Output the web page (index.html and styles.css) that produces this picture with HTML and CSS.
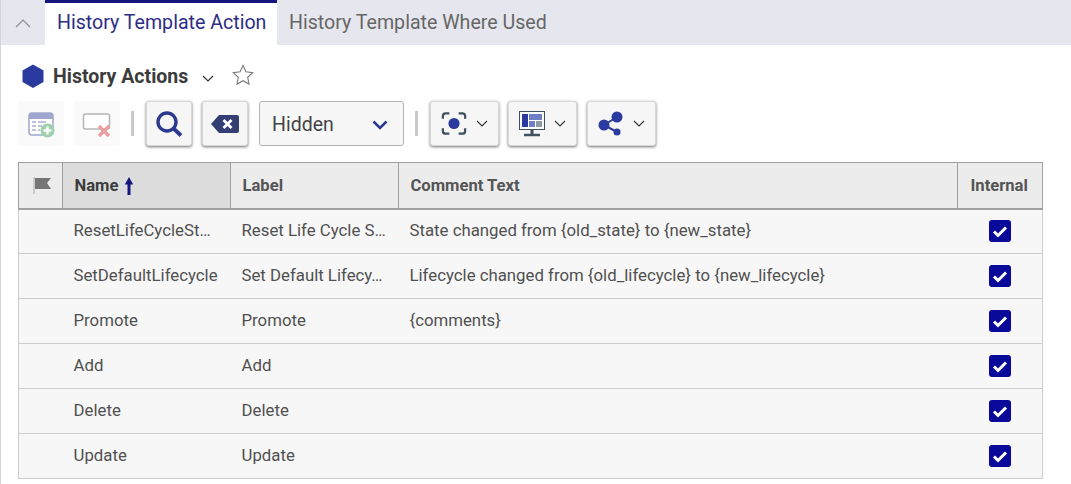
FILE: index.html
```html
<!DOCTYPE html>
<html lang="en">

<head>
    <meta charset="UTF-8">
    <meta name="viewport" content="width=device-width, initial-scale=1.0">
    <title>History Actions</title>
    <link rel="stylesheet" href="styles.css">
</head>

<body>
    <nav class="tabs">
        <button class="collapse">
            <svg width="16" height="10" viewBox="0 0 16 10"><path d="M1 9l7-7 7 7" fill="none" stroke="#8a8d94" stroke-width="1.2"/></svg>
        </button>
        <div class="tab active">History Template Action</div>
        <div class="tab">History Template Where Used</div>
    </nav>

    <main class="content">
        <div class="title-row">
            <svg class="hex" width="22" height="24" viewBox="0 0 22 24"><path d="M11 .5l10.500 6v11.500l-10.500 6-10.500-6V6.500z" fill="#2b3a9f"/></svg>
            <h1>History Actions</h1>
            <svg class="chev-title" width="12" height="7" viewBox="0 0 12 7"><path d="M1 1l5 5 5-5" fill="none" stroke="#333" stroke-width="1.200"/></svg>
            <svg class="star" width="22" height="22" viewBox="0 0 22 22"><path d="M11 1.500l2.900 6.300 6.800.8-5 4.700 1.300 6.800-6-3.400-6 3.400 1.300-6.800-5-4.700 6.800-.8z" fill="none" stroke="#7b7b7b" stroke-width="1.100"/></svg>
        </div>

        <div class="toolbar">
            <button class="tool disabled">
                <svg width="28" height="28" viewBox="0 0 28 28">
                    <rect x="2" y="3" width="24" height="22" rx="3" fill="#fff" stroke="#9ea6cf" stroke-width="1.500"/>
                    <path d="M2 6a3 3 0 0 1 3-3h18a3 3 0 0 1 3 3v3H2z" fill="#9ea6cf"/>
                    <path d="M5 12h4M11 12h8M5 16h4M11 16h4M5 20h4M11 20h2" stroke="#a9b0d3" stroke-width="1.500"/>
                    <circle cx="20.500" cy="20.500" r="7" fill="#9fd0ab"/>
                    <path d="M20.500 16.500v8M16.500 20.500h8" stroke="#fff" stroke-width="2.400"/>
                </svg>
            </button>
            <button class="tool disabled">
                <svg width="30" height="28" viewBox="0 0 30 28">
                    <rect x="1.500" y="4" width="26" height="15" rx="2" fill="#fff" stroke="#b5b5b5" stroke-width="1.500"/>
                    <path d="M4 19h20" stroke="#c9c9c9" stroke-width="2"/>
                    <path d="M17 16l10 10M27 16l-10 10" stroke="#e9a0a0" stroke-width="3.500"/>
                </svg>
            </button>
            <span class="sep"></span>
            <button class="tool raised">
                <svg width="28" height="28" viewBox="0 0 28 28"><circle cx="12" cy="12" r="9" fill="none" stroke="#2b3a8f" stroke-width="3.400"/><path d="M18 18l8 7.500" stroke="#2b3a8f" stroke-width="3.800"/></svg>
            </button>
            <button class="tool raised">
                <svg width="30" height="20" viewBox="0 0 30 20"><path d="M9 1h18a2 2 0 0 1 2 2v14a2 2 0 0 1-2 2H9L1 10z" fill="#333f73"/><path d="M13.500 6l8 8M21.500 6l-8 8" stroke="#fff" stroke-width="2.800"/></svg>
            </button>
            <div class="select">
                <span>Hidden</span>
                <svg width="16" height="10" viewBox="0 0 16 10"><path d="M1.500 1.500L8 8l6.500-6.500" fill="none" stroke="#2b3a8f" stroke-width="2.600"/></svg>
            </div>
            <span class="sep"></span>
            <button class="tool raised wide">
                <svg width="26" height="25" viewBox="0 0 28 26">
                    <path d="M2 8V5a3 3 0 0 1 3-3h4M19 2h4a3 3 0 0 1 3 3v3M26 18v3a3 3 0 0 1-3 3h-4M9 24H5a3 3 0 0 1-3-3v-3" fill="none" stroke="#3f5060" stroke-width="2.400"/>
                    <circle cx="14" cy="13" r="6" fill="#2b3a9f"/>
                </svg>
                <svg class="chev" width="12" height="7" viewBox="0 0 12 7"><path d="M1 1l5 5 5-5" fill="none" stroke="#333" stroke-width="1.100"/></svg>
            </button>
            <button class="tool raised wide">
                <svg width="26" height="26" viewBox="0 0 26 26">
                    <rect x="0.500" y="0.500" width="25" height="18" fill="#fff" stroke="#3f5060"/>
                    <rect x="3" y="3" width="6" height="13" fill="#2b3a9f"/>
                    <rect x="10" y="3" width="13" height="6" fill="#6f7fc8"/>
                    <rect x="10" y="10" width="6" height="6" fill="#6f7fc8"/>
                    <rect x="17" y="10" width="6" height="6" fill="#8d9ba5"/>
                    <path d="M13 19v4" stroke="#3f5060" stroke-width="3"/>
                    <path d="M5 24h16" stroke="#3f5060" stroke-width="2.500"/>
                </svg>
                <svg class="chev" width="12" height="7" viewBox="0 0 12 7"><path d="M1 1l5 5 5-5" fill="none" stroke="#333" stroke-width="1.100"/></svg>
            </button>
            <button class="tool raised wide">
                <svg width="26" height="26" viewBox="0 0 26 26">
                    <path d="M6 14L19 6M6 14l13 7" stroke="#2b3a9f" stroke-width="2"/>
                    <circle cx="6" cy="14" r="5.500" fill="#2b3a9f"/>
                    <circle cx="19" cy="6" r="5.500" fill="#2b3a9f"/>
                    <circle cx="19" cy="21" r="3.500" fill="#2b3a9f"/>
                </svg>
                <svg class="chev" width="12" height="7" viewBox="0 0 12 7"><path d="M1 1l5 5 5-5" fill="none" stroke="#333" stroke-width="1.100"/></svg>
            </button>
        </div>

        <table class="grid">
            <thead>
                <tr>
                    <th class="col-flag">
                        <svg class="flag" width="18" height="17" viewBox="0 0 18 17"><path d="M1 0v17" stroke="#aaa" stroke-width="1"/><path d="M2 1h16l-4 5 4 6H2z" fill="#757575"/></svg>
                    </th>
                    <th class="col-name sorted">Name
                        <svg class="arrow" width="10" height="18" viewBox="0 0 10 18"><path d="M5 0l4.200 7.500H6.500V18h-3V7.500H.8z" fill="#15157f"/></svg>
                    </th>
                    <th class="col-label">Label</th>
                    <th>Comment Text</th>
                    <th class="col-internal">Internal</th>
                </tr>
            </thead>
            <tbody id="rows"></tbody>
        </table>
    </main>

    <script src="app.js"></script>
</body>

</html>
```

FILE: styles.css
```css
* {
    box-sizing: border-box;
}

body {
    margin: 0;
    height: 484px;
    overflow: hidden;
    background: #fff;
    border-left: 1px solid #d4d4d4;
    font-family: Roboto, "Liberation Sans", sans-serif;
    color: #505050;
}

button {
    font: inherit;
    padding: 0;
    cursor: pointer;
}

.tabs {
    display: flex;
    height: 45px;
    background: #e6e7ee;
}

.collapse {
    width: 44px;
    border: 0;
    background: none;
    display: flex;
    align-items: center;
    justify-content: center;
}

.tab {
    padding: 3px 11px 0 12px;
    font-size: 19.600px;
    line-height: 39px;
    white-space: nowrap;
    color: #666;
}

.tab.active {
    width: 232px;
    background: #fff;
    border-top: 3px solid #15157f;
    padding-top: 0;
    color: #2d2d86;
}

.content {
    padding: 0 17px;
}

.title-row {
    display: flex;
    align-items: center;
    height: 54px;
    padding: 8px 0 0 4px;
}

.title-row h1 {
    margin: 0 0 0 9px;
    font-size: 19.500px;
    font-weight: 700;
    color: #3c3c3c;
}

.chev-title {
    margin-left: 14px;
    margin-top: 4px;
}

.star {
    margin-left: 18px;
    margin-bottom: 2px;
}

.toolbar {
    display: flex;
    align-items: center;
    height: 45px;
    margin-top: 2px;
}

.tool {
    width: 46px;
    height: 45px;
    margin-right: 10px;
    border: 0;
    border-radius: 3px;
    background: #f6f6f7;
    display: flex;
    align-items: center;
    justify-content: center;
}

.tool.disabled {
    background: #fafafa;
}

.tool.raised {
    border: 1px solid #d8d8d8;
    box-shadow: 0 1px 3px rgba(0, 0, 0, 0.55);
}

.tool.wide {
    width: 69px;
    margin-right: 9px;
    gap: 9px;
}

.tool.wide:last-child {
    margin-left: 1px;
}

.sep {
    width: 3px;
    height: 25px;
    margin: 0 12px 0 1px;
    background: #c9c9c9;
}

.select {
    width: 145px;
    height: 45px;
    margin: 0 10px 0 1px;
    padding: 2px 15px 0 12px;
    border: 1px solid #b3b3b3;
    border-radius: 3px;
    background: #f7f7f8;
    display: flex;
    align-items: center;
    justify-content: space-between;
    font-size: 19.500px;
    color: #444;
}

.grid {
    width: 1025px;
    margin-top: 16px;
    border-collapse: collapse;
    table-layout: fixed;
    font-size: 16.800px;
}

.grid th {
    height: 46px;
    padding: 0 0 0 11.500px;
    text-align: left;
    font-size: 16.600px;
    font-weight: 700;
    color: #555;
    background: #ececec;
    border: 1px solid #a0a0a0;
    border-bottom-width: 2px;
}

.grid th.sorted {
    background: #dcdcdc;
    color: #3c3c3c;
}

.grid td {
    height: 45px;
    padding: 0 11px 2px;
    background: #f7f7f7;
    border-top: 1px solid #cdcdcd;
    border-bottom: 1px solid #cdcdcd;
    white-space: nowrap;
}

.grid td:first-child {
    border-left: 1px solid #cdcdcd;
}

.grid td:last-child {
    border-right: 1px solid #cdcdcd;
    padding-bottom: 0;
}

.col-flag {
    width: 44px;
}

.grid th.col-flag {
    padding: 0 0 0 14px;
}

.flag {
    display: block;
}

.col-name,
.col-label {
    width: 168px;
}

.col-internal {
    width: 85px;
}

.grid th.col-internal {
    padding-left: 12.500px;
}

.arrow {
    vertical-align: -4px;
    margin-left: 1px;
}

.check {
    display: block;
    margin: 0 auto;
}
```

FILE: app.js
```js
var rows = [
    ['ResetLifeCycleSt…', 'Reset Life Cycle S…', 'State changed from {old_state} to {new_state}'],
    ['SetDefaultLifecycle', 'Set Default Lifecy…', 'Lifecycle changed from {old_lifecycle} to {new_lifecycle}'],
    ['Promote', 'Promote', '{comments}'],
    ['Add', 'Add', ''],
    ['Delete', 'Delete', ''],
    ['Update', 'Update', '']
];

var check = '<svg class="check" width="22" height="22" viewBox="0 0 22 22">' +
    '<rect width="22" height="22" rx="3" fill="#0a0a9a"/>' +
    '<path d="M5 11.500l4 4 8-8" fill="none" stroke="#fff" stroke-width="3"/></svg>';

var body = document.getElementById('rows');
for (var i = 0; i < rows.length; i++) {
    body.innerHTML += '<tr><td></td><td>' + rows[i][0] + '</td><td>' + rows[i][1] +
        '</td><td>' + rows[i][2] + '</td><td>' + check + '</td></tr>';
}
```
